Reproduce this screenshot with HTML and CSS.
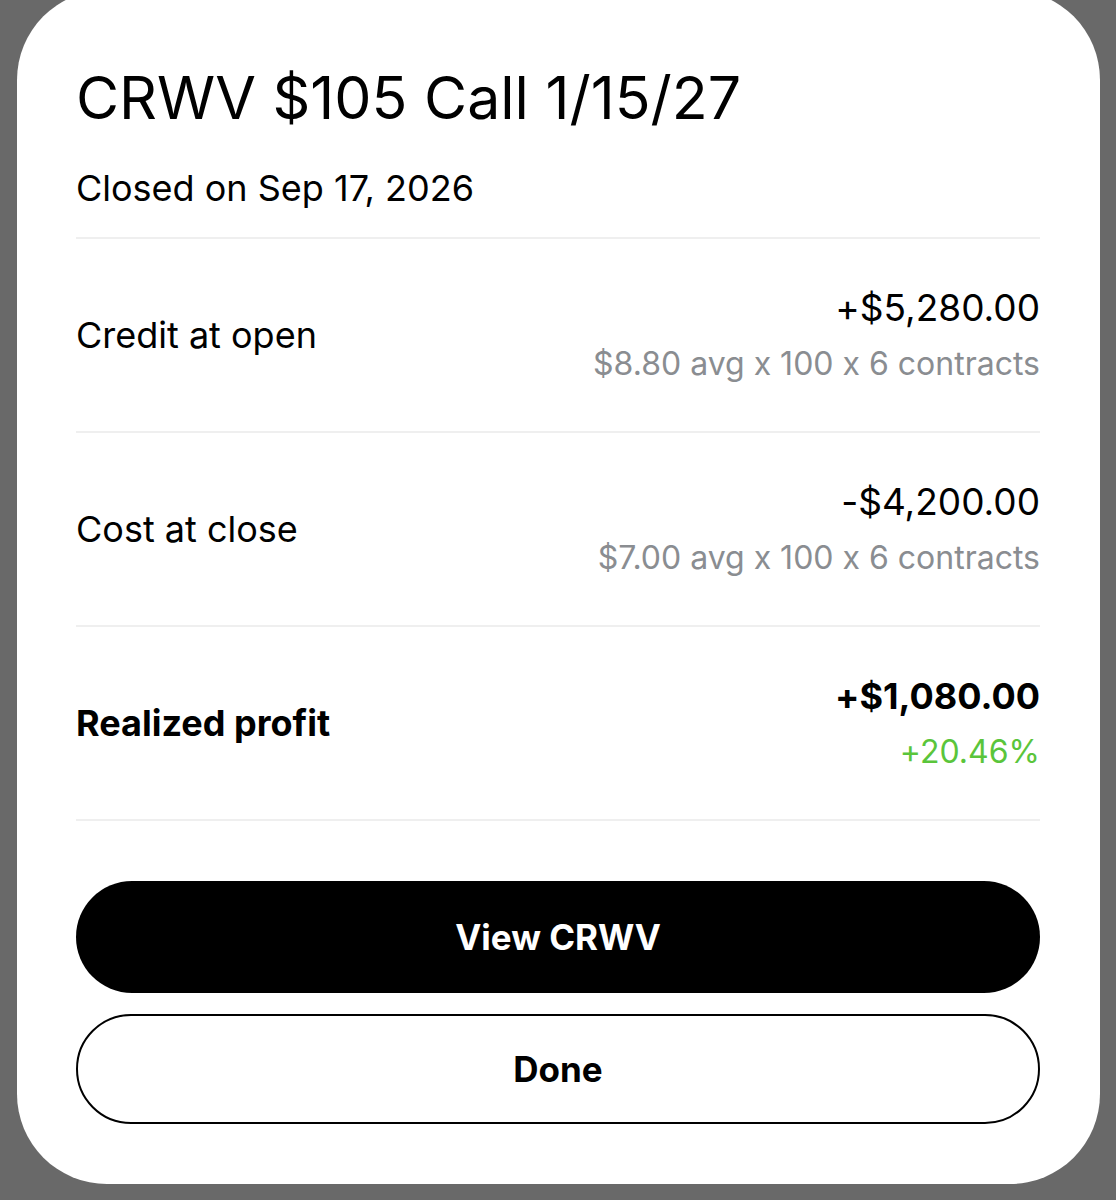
FILE: index.html
```html
<!DOCTYPE html>
<html lang="en">
<head>
    <meta charset="UTF-8">
    <meta name="viewport" content="width=device-width, initial-scale=1.0">
    <title>CRWV $105 Call 1/15/27</title>
    <link rel="stylesheet" href="styles.css">
</head>
<body>
    <div class="sheet">
        <h1 class="title">CRWV $105 Call 1/15/27</h1>
        <p class="subtitle">Closed on Sep 17, 2026</p>

        <div class="rows">
            <div class="row">
                <span class="label">Credit at open</span>
                <div class="values">
                    <span class="amount">+$5,280.00</span>
                    <span class="detail">$8.80 avg x 100 x 6 contracts</span>
                </div>
            </div>
            <div class="row">
                <span class="label">Cost at close</span>
                <div class="values">
                    <span class="amount">-$4,200.00</span>
                    <span class="detail">$7.00 avg x 100 x 6 contracts</span>
                </div>
            </div>
            <div class="row total">
                <span class="label">Realized profit</span>
                <div class="values">
                    <span class="amount">+$1,080.00</span>
                    <span class="detail up">+20.46%</span>
                </div>
            </div>
        </div>

        <div class="actions">
            <button class="btn primary">View CRWV</button>
            <button class="btn outline">Done</button>
        </div>
    </div>
</body>
</html>
```

FILE: styles.css
```css
/* closed position sheet */
body {
    margin: 0;
    background: #696969;
    font-family: Inter, "Noto Sans", Arial, sans-serif;
    font-feature-settings: "calt" 0;
    color: #000;
}

.sheet {
    background: #fff;
    margin: -10px 16px 0 17px;
    padding: 73px 60px 60px 59px;
    border-radius: 90px;
}

.title {
    margin: 0;
    font-size: 59px;
    line-height: 70px;
    font-weight: 400;
}

.subtitle {
    margin: 33px 0 27px;
    font-size: 36px;
    line-height: 44px;
}

.row {
    display: flex;
    justify-content: space-between;
    align-items: center;
    height: 192px;
    border-top: 2px solid #efefef;
}

.row:last-child {
    border-bottom: 2px solid #efefef;
}

.label {
    font-size: 36px;
}

.values {
    display: flex;
    flex-direction: column;
    align-items: flex-end;
    gap: 14px;
}

.amount {
    font-size: 37px;
    line-height: 44px;
}

.detail {
    font-size: 32px;
    line-height: 40px;
    color: #8a8d91;
}

.detail.up {
    color: #5ac53b;
}

.total .label {
    font-weight: 700;
}

.total .amount {
    font-size: 36px;
    font-weight: 650;
}

.actions {
    display: flex;
    flex-direction: column;
    gap: 21px;
    margin-top: 60px;
}

.btn {
    height: 112px;
    border-radius: 56px;
    font-family: inherit;
    font-size: 35px;
    font-weight: 700;
    cursor: pointer;
}

.btn.primary {
    background: #000;
    color: #fff;
    border: none;
}

.btn.outline {
    height: 110px;
    background: #fff;
    color: #000;
    border: 2px solid #000;
}
```
